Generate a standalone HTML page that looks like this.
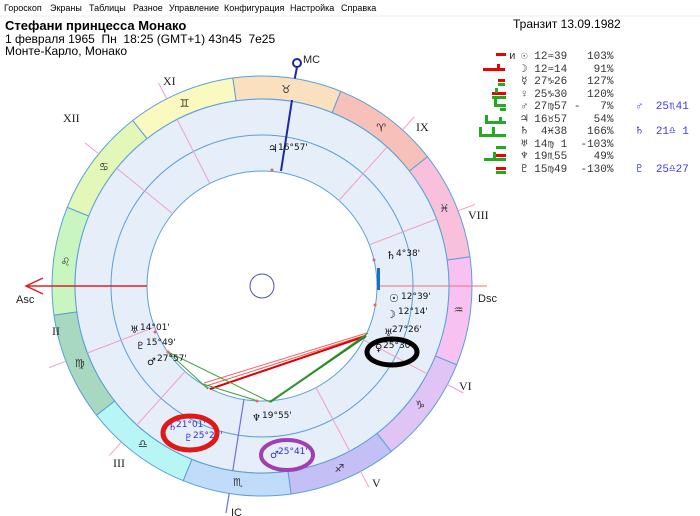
<!DOCTYPE html>
<html><head><meta charset="utf-8"><style>
body{margin:0;width:700px;height:516px;background:#fff;overflow:hidden;font-family:"Liberation Sans","DejaVu Sans",sans-serif}
svg{position:absolute;left:0;top:0}
text{white-space:pre}
</style></head><body>
<svg width="700" height="516" viewBox="0 0 700 516" xmlns="http://www.w3.org/2000/svg" xml:space="preserve">
<g font-family="Liberation Sans, sans-serif" font-size="9" fill="#000">
<text x="4" y="11">Гороскоп</text><text x="50" y="11">Экраны</text><text x="89" y="11">Таблицы</text><text x="133" y="11">Разное</text><text x="169" y="11">Управление</text><text x="224" y="11">Конфигурация</text><text x="290" y="11">Настройка</text><text x="341" y="11">Справка</text>
</g>
<line x1="0" y1="16" x2="700" y2="16" stroke="#eee"/>
<text x="5" y="30" font-size="13" font-weight="bold" font-family="Liberation Sans, sans-serif">Стефани принцесса Монако</text>
<text x="5" y="43" font-size="12" font-family="Liberation Sans, sans-serif">1 февраля 1965  Пн  18:25 (GMT+1) 43n45  7e25</text>
<text x="5" y="55" font-size="12" font-family="Liberation Sans, sans-serif">Монте-Карло, Монако</text>
<text x="513" y="28" font-size="12" font-family="Liberation Sans, sans-serif">Транзит 13.09.1982</text>

<circle cx="262" cy="286" r="187" fill="#e6eef9" stroke="#5aa0d8" stroke-width="1"/>
<g stroke="#5aa0d8" stroke-width="1">
<path d="M67.3,207.3 A210,210 0 0 0 54.0,315.2 L76.8,312.0 A187,187 0 0 1 88.6,216.0Z" fill="#c8f5c0"/>
<path d="M54.0,315.2 A210,210 0 0 0 96.5,415.3 L114.6,401.1 A187,187 0 0 1 76.8,312.0Z" fill="#a8d8c0"/>
<path d="M96.5,415.3 A210,210 0 0 0 183.3,480.7 L191.9,459.4 A187,187 0 0 1 114.6,401.1Z" fill="#b8f6f6"/>
<path d="M183.3,480.7 A210,210 0 0 0 291.2,494.0 L288.0,471.2 A187,187 0 0 1 191.9,459.4Z" fill="#c0dcf8"/>
<path d="M291.2,494.0 A210,210 0 0 0 391.3,451.5 L377.1,433.4 A187,187 0 0 1 288.0,471.2Z" fill="#c4c0f6"/>
<path d="M391.3,451.5 A210,210 0 0 0 456.7,364.7 L435.4,356.0 A187,187 0 0 1 377.1,433.4Z" fill="#e0c4f6"/>
<path d="M456.7,364.7 A210,210 0 0 0 470.0,256.8 L447.2,260.0 A187,187 0 0 1 435.4,356.0Z" fill="#f7c2f2"/>
<path d="M470.0,256.8 A210,210 0 0 0 427.5,156.7 L409.4,170.9 A187,187 0 0 1 447.2,260.0Z" fill="#f9c0dc"/>
<path d="M427.5,156.7 A210,210 0 0 0 340.7,91.3 L332.1,112.6 A187,187 0 0 1 409.4,170.9Z" fill="#f7c0b8"/>
<path d="M340.7,91.3 A210,210 0 0 0 232.8,78.0 L236.0,100.8 A187,187 0 0 1 332.1,112.6Z" fill="#fbe0c0"/>
<path d="M232.8,78.0 A210,210 0 0 0 132.7,120.5 L146.9,138.6 A187,187 0 0 1 236.0,100.8Z" fill="#fafac0"/>
<path d="M132.7,120.5 A210,210 0 0 0 67.3,207.3 L88.6,216.0 A187,187 0 0 1 146.9,138.6Z" fill="#e2f7b8"/>
</g>
<g font-family="DejaVu Sans, sans-serif" font-size="11" fill="#333" text-anchor="middle" dominant-baseline="central">
<text x="65.5" y="261.9">♌</text><text x="103.9" y="166.8">♋</text><text x="184.6" y="103.7">♊</text><text x="286.1" y="89.5">♉</text><text x="381.2" y="127.9">♈</text><text x="444.3" y="208.6">♓</text><text x="458.5" y="310.1">♒</text><text x="420.1" y="405.2">♑</text><text x="339.4" y="468.3">♐</text><text x="237.9" y="482.5">♏</text><text x="142.8" y="444.1">♎</text><text x="79.7" y="363.4">♍</text>
</g>
<circle cx="262" cy="286" r="151" fill="none" stroke="#5aa0d8"/>
<circle cx="262" cy="286" r="115" fill="#fff" stroke="#5aa0d8"/>
<g stroke="#f0a0c8" stroke-width="1">
<line x1="209.8" y1="183.5" x2="177.1" y2="119.4"/><line x1="166.7" y1="98.9" x2="158.5" y2="82.9"/>
<line x1="172.6" y1="213.6" x2="116.7" y2="168.3"/><line x1="98.8" y1="153.9" x2="84.8" y2="142.6"/>
<line x1="154.6" y1="327.2" x2="87.4" y2="353.0"/><line x1="65.9" y1="361.2" x2="49.1" y2="367.6"/>
<line x1="185.1" y1="371.5" x2="136.9" y2="425.0"/><line x1="121.5" y1="442.1" x2="109.5" y2="455.4"/>
<line x1="316.0" y1="387.5" x2="349.7" y2="451.1"/><line x1="360.5" y1="471.4" x2="369.0" y2="487.3"/>
<line x1="363.5" y1="339.9" x2="427.1" y2="373.8"/><line x1="447.4" y1="384.5" x2="463.3" y2="393.0"/>
<line x1="369.4" y1="244.8" x2="436.6" y2="219.0"/><line x1="458.1" y1="210.8" x2="474.9" y2="204.4"/>
<line x1="338.9" y1="200.5" x2="387.1" y2="147.0"/><line x1="402.5" y1="129.9" x2="414.5" y2="116.6"/>
<line x1="377" y1="286" x2="487" y2="286" stroke="#f07070"/>
</g>
<g stroke="#1a2aa0" stroke-width="2"><line x1="281" y1="171" x2="292" y2="100"/><line x1="294.8" y1="78.5" x2="297" y2="67"/></g>
<circle cx="297" cy="63" r="4" fill="#fff" stroke="#1a2aa0" stroke-width="2"/>
<g stroke="#7070e0" stroke-width="1.2"><line x1="244" y1="399" x2="232.8" y2="470.7"/><line x1="229.2" y1="493.4" x2="226" y2="513"/></g>
<line x1="26" y1="286" x2="147" y2="286" stroke="#e02020" stroke-width="1.5"/>
<polyline points="43,278 26,286 43,294" fill="none" stroke="#e02020" stroke-width="1.5"/>
<rect x="377" y="268" width="3" height="22" fill="#1a70c0"/>
<circle cx="262" cy="286" r="12" fill="none" stroke="#5050c0"/>
<g stroke-width="1">
<line x1="367" y1="333" x2="204" y2="383" stroke="#f06060"/>
<line x1="366" y1="335" x2="206" y2="386" stroke="#f06060"/>
<line x1="366" y1="336" x2="210" y2="389" stroke="#e00000" stroke-width="2"/>
<line x1="366" y1="336" x2="270" y2="402" stroke="#208020" stroke-width="2"/>
<line x1="368" y1="333" x2="270" y2="402" stroke="#40a040"/>
<line x1="168" y1="352" x2="208" y2="389" stroke="#40a040"/>
<line x1="168" y1="352" x2="270" y2="402" stroke="#40a040"/>
<line x1="203" y1="384" x2="258" y2="401" stroke="#40a040"/>
</g>
<g fill="#f06060"><circle cx="272" cy="170" r="1.5"/><circle cx="374" cy="260" r="1.5"/><circle cx="375" cy="305" r="1.5"/><circle cx="155" cy="332" r="1.5"/><circle cx="168" cy="352" r="1.5"/><circle cx="257" cy="401" r="1.5"/></g>
<g font-family="Liberation Serif, serif" font-size="12" fill="#222">
<text x="163" y="85">XI</text><text x="63" y="122">XII</text><text x="52" y="335">II</text><text x="113" y="467">III</text><text x="372" y="487">V</text><text x="459" y="390">VI</text><text x="468" y="219">VIII</text><text x="416" y="131">IX</text>
</g>
<g font-family="Liberation Sans, sans-serif" font-size="11" fill="#222">
<text x="303" y="63">MC</text><text x="16" y="303">Asc</text><text x="478" y="302">Dsc</text><text x="231" y="516">IC</text>
</g>
<g font-family="DejaVu Sans, sans-serif" font-size="9" fill="#111">
<text x="268" y="152" font-size="11">♃</text><text x="278" y="150">16°57'</text>
<text x="386" y="259" font-size="11">♄</text><text x="396" y="256">4°38'</text>
<text x="389" y="302" font-size="11">☉</text><text x="401" y="299">12°39'</text>
<text x="386" y="318" font-size="11">☽</text><text x="398" y="314">12°14'</text>
<text x="384" y="336" font-size="10">♅</text><text x="392" y="332">27°26'</text>
<text x="375" y="351" font-size="10">♀</text><text x="383" y="348">25°30'</text>
<text x="130" y="333" font-size="10">♅</text><text x="140" y="330">14°01'</text>
<text x="136" y="349" font-size="10">♇</text><text x="146" y="345">15°49'</text>
<text x="147" y="365" font-size="10">♂</text><text x="157" y="361">27°57'</text>
<text x="252" y="421" font-size="10">♆</text><text x="262" y="418">19°55'</text>
</g>
<g font-family="DejaVu Sans, sans-serif" font-size="9" fill="#3030d0">
<text x="168" y="430" font-size="10">♄</text><text x="176" y="427">21°01'</text>
<text x="184" y="441" font-size="10">♇</text><text x="193" y="438">25°27'</text>
<text x="270" y="458" font-size="10">♂</text><text x="278" y="454">25°41'</text>
</g>
<ellipse cx="190" cy="433" rx="27" ry="17" fill="none" stroke="#e01818" stroke-width="5"/>
<ellipse cx="392" cy="352" rx="25" ry="13" fill="none" stroke="#000" stroke-width="5"/>
<ellipse cx="287" cy="455" rx="26" ry="15" fill="none" stroke="#a040b0" stroke-width="4"/>
<g font-family="Liberation Mono, DejaVu Sans Mono, monospace" font-size="11" fill="#333">
<text x="509" y="59">и</text>
<text x="521" y="59">☉ 12♒39   103%</text>
<text x="521" y="72">☽ 12♒14    91%</text>
<text x="521" y="84">☿ 27♑26   127%</text>
<text x="521" y="97">♀ 25♑30   120%</text>
<text x="521" y="109">♂ 27♍57 -   7%</text>
<text x="521" y="122">♃ 16♉57    54%</text>
<text x="521" y="134">♄  4♓38   166%</text>
<text x="521" y="147">♅ 14♍ 1  -103%</text>
<text x="521" y="159">♆ 19♏55    49%</text>
<text x="521" y="172">♇ 15♍49  -130%</text>
</g>
<g font-family="Liberation Mono, DejaVu Sans Mono, monospace" font-size="11" fill="#3a3af0">
<text x="636" y="109">♂  25♏41</text><text x="636" y="134">♄  21♎ 1</text><text x="636" y="172">♇  25♎27</text>
</g>
<g>
<rect x="496" y="53" width="10" height="3" fill="#e00"/>
<rect x="483" y="68" width="22" height="3" fill="#e00"/><rect x="497" y="64" width="3" height="5" fill="#e00"/>
<rect x="498" y="79" width="7" height="3" fill="#e00"/><rect x="498" y="83" width="7" height="3" fill="#2a2"/>
<rect x="492" y="92" width="14" height="3" fill="#e00"/><rect x="492" y="96" width="14" height="3" fill="#2a2"/><rect x="495" y="88" width="3" height="5" fill="#2a2"/>
<rect x="494" y="104" width="12" height="3" fill="#2a2"/><rect x="500" y="108" width="6" height="3" fill="#2a2"/><rect x="494" y="98" width="3" height="7" fill="#2a2"/>
<rect x="485" y="121" width="21" height="3" fill="#2a2"/><rect x="485" y="115" width="3" height="7" fill="#2a2"/><rect x="499" y="117" width="3" height="5" fill="#2a2"/>
<rect x="479" y="134" width="27" height="3" fill="#2a2"/><rect x="479" y="127" width="3" height="8" fill="#2a2"/><rect x="492" y="127" width="3" height="8" fill="#2a2"/>
<rect x="496" y="146" width="10" height="3" fill="#2a2"/>
<rect x="484" y="158" width="22" height="3" fill="#2a2"/><rect x="493" y="154" width="13" height="3" fill="#e00"/><rect x="493" y="152" width="3" height="6" fill="#2a2"/>
<rect x="496" y="167" width="10" height="3" fill="#e00"/><rect x="496" y="171" width="10" height="3" fill="#2a2"/>
</g>
</svg>
</body></html>
